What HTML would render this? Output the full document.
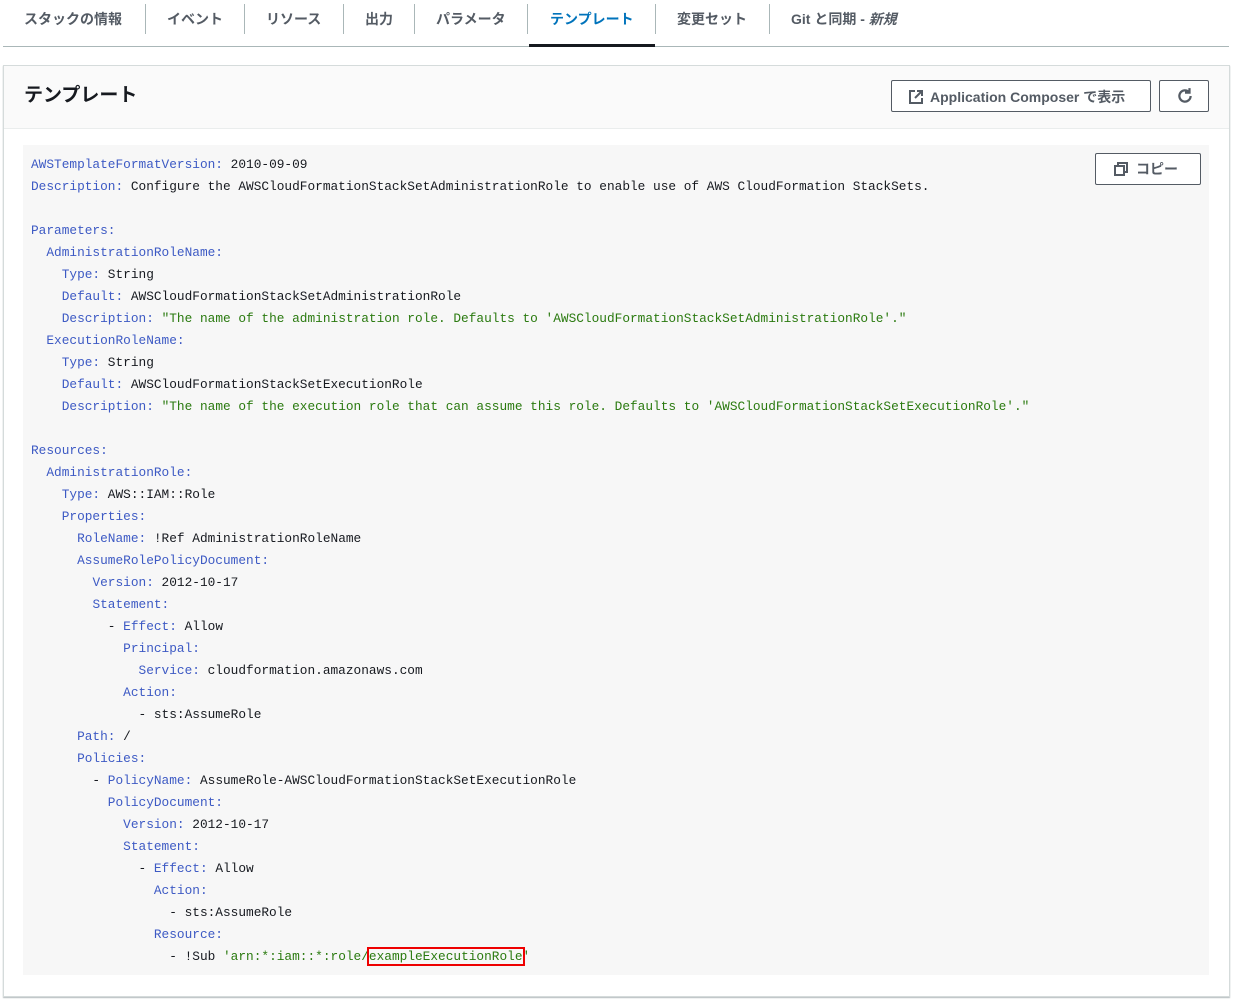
<!DOCTYPE html>
<html><head><meta charset="utf-8"><style>
body{margin:0;width:1238px;height:1007px;background:#fff;position:relative;font-family:"Liberation Sans","Noto Sans CJK JP",sans-serif;overflow:hidden}
.tab{position:absolute;top:9px;font-size:14px;font-weight:bold;color:#545b64;white-space:nowrap}
.sep{position:absolute;top:4px;width:1px;height:30px;background:#aab7b8}
.panel{position:absolute;left:3px;top:65px;width:1225px;height:930px;border:1px solid #d5dbdb;box-shadow:0 1px 1px rgba(0,28,36,.3)}
.hdr{position:absolute;left:0;top:0;width:1225px;height:62px;background:#fafafa;border-bottom:1px solid #eaeded}
.btn{position:absolute;border:1px solid #545b64;border-radius:2px;background:#fff;color:#545b64;font-weight:bold;font-size:14px;box-sizing:border-box}
.code{position:absolute;left:23px;top:145px;width:1186px;height:830px;background:#f7f7f7}
pre{margin:0;position:absolute;left:8px;top:9px;font-family:"Liberation Mono",monospace;font-size:12.8px;line-height:22px;color:#16191f}
.k{color:#3d5ac4}.s{color:#2a7a0f}
</style></head><body>
<span class="tab" style="left:24px">スタックの情報</span><div class="sep" style="left:145px"></div>
<span class="tab" style="left:167px">イベント</span><div class="sep" style="left:244px"></div>
<span class="tab" style="left:266px">リソース</span><div class="sep" style="left:343px"></div>
<span class="tab" style="left:365px">出力</span><div class="sep" style="left:414px"></div>
<span class="tab" style="left:436px">パラメータ</span><div class="sep" style="left:527px"></div>
<span class="tab" style="left:550px;color:#0073bb">テンプレート</span><div class="sep" style="left:655px"></div>
<span class="tab" style="left:677px">変更セット</span><div class="sep" style="left:769px"></div>
<span class="tab" style="left:791px">Git と同期 - <i>新規</i></span>
<div style="position:absolute;left:3px;top:46px;width:1226px;height:1px;background:#aab7b8"></div>
<div style="position:absolute;left:529px;top:44px;width:126px;height:3px;background:#16191f"></div>
<div class="panel">
<div class="hdr">
<div style="position:absolute;left:20px;top:14px;font-size:19px;font-weight:bold;color:#16191f">テンプレート</div>
<div class="btn" style="left:887px;top:14px;width:260px;height:32px;padding:6px 0 0 16px">
<svg width="16" height="16" viewBox="0 0 16 16" style="vertical-align:-3px;margin-right:6px" fill="none" stroke="#545b64" stroke-width="2"><path d="M7 2H2v12h12V9M9 2h5v5M14 2L7 9"/></svg>Application Composer で表示</div>
<div class="btn" style="left:1155px;top:14px;width:50px;height:32px;padding:6px 0 0 16px">
<svg width="18" height="18" viewBox="0 0 16 16" fill="none" stroke="#545b64" stroke-width="2"><path d="M13 8a5 5 0 1 1-1.5-3.6M12 1v4H8"/></svg></div>
</div>
</div>
<div class="code">
<pre><span class="k">AWSTemplateFormatVersion:</span> 2010-09-09
<span class="k">Description:</span> Configure the AWSCloudFormationStackSetAdministrationRole to enable use of AWS CloudFormation StackSets.

<span class="k">Parameters:</span>
  <span class="k">AdministrationRoleName:</span>
    <span class="k">Type:</span> String
    <span class="k">Default:</span> AWSCloudFormationStackSetAdministrationRole
    <span class="k">Description:</span> <span class="s">"The name of the administration role. Defaults to 'AWSCloudFormationStackSetAdministrationRole'."</span>
  <span class="k">ExecutionRoleName:</span>
    <span class="k">Type:</span> String
    <span class="k">Default:</span> AWSCloudFormationStackSetExecutionRole
    <span class="k">Description:</span> <span class="s">"The name of the execution role that can assume this role. Defaults to 'AWSCloudFormationStackSetExecutionRole'."</span>

<span class="k">Resources:</span>
  <span class="k">AdministrationRole:</span>
    <span class="k">Type:</span> AWS::IAM::Role
    <span class="k">Properties:</span>
      <span class="k">RoleName:</span> !Ref AdministrationRoleName
      <span class="k">AssumeRolePolicyDocument:</span>
        <span class="k">Version:</span> 2012-10-17
        <span class="k">Statement:</span>
          - <span class="k">Effect:</span> Allow
            <span class="k">Principal:</span>
              <span class="k">Service:</span> cloudformation.amazonaws.com
            <span class="k">Action:</span>
              - sts:AssumeRole
      <span class="k">Path:</span> /
      <span class="k">Policies:</span>
        - <span class="k">PolicyName:</span> AssumeRole-AWSCloudFormationStackSetExecutionRole
          <span class="k">PolicyDocument:</span>
            <span class="k">Version:</span> 2012-10-17
            <span class="k">Statement:</span>
              - <span class="k">Effect:</span> Allow
                <span class="k">Action:</span>
                  - sts:AssumeRole
                <span class="k">Resource:</span>
                  - !Sub <span class="s">'arn:*:iam::*:role/<span style="outline:2px solid #e00;outline-offset:0">exampleExecutionRole</span>'</span></pre>
<div class="btn" style="left:1072px;top:8px;width:106px;height:32px;padding:5px 0 0 18px">
<svg width="14" height="14" viewBox="0 0 14 14" fill="none" stroke="#545b64" stroke-width="2" style="vertical-align:-2px;margin-right:8px"><path d="M4 4V1h9v9h-3M1 4h9v9H1z"/></svg>コピー</div>
</div>
</body></html>
